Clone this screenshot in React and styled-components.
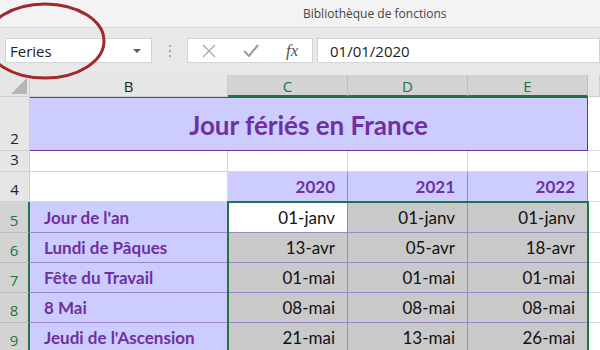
import React from "react";
import styled, { createGlobalStyle } from "styled-components";

const Global = createGlobalStyle`
  html, body {
    margin: 0;
    padding: 0;
    width: 600px;
    height: 350px;
    overflow: hidden;
    background: #ffffff;
  }
`;

const GREEN = "#217346";
const LAVENDER = "#ccccff";
const PURPLE = "#7030a0";
const PURPLE_LINE = "#9a86c8";
const GRAY_CELL = "#c9c9c9";
const GRID = "#dadada";

const Window = styled.div`
  position: relative;
  width: 600px;
  height: 350px;
  overflow: hidden;
  font-family: Lato, "Liberation Sans", sans-serif;
`;

const Ribbon = styled.div`
  height: 27px;
  background: #f3f3f3;
  border-bottom: 1px solid #d6d6d6;
  display: flex;
  align-items: center;
  padding-left: 303px;
  font-family: "Open Sans", "Noto Sans", sans-serif;
  font-size: 12px;
  color: #444;
`;

const FormulaBar = styled.div`
  height: 47px;
  box-sizing: border-box;
  background: #e8e8e8;
  display: flex;
  align-items: flex-start;
  padding: 10px 0 0 5px;
  font-family: "Open Sans", "Noto Sans", sans-serif;
`;

const Box = styled.div`
  height: 25px;
  box-sizing: border-box;
  background: #fff;
  border: 1px solid #d4d4d4;
  display: flex;
  align-items: center;
  width: ${(p) => p.$w || "auto"};
  flex: ${(p) => (p.$grow ? 1 : "none")};
  padding: 0 ${(p) => p.$pad || 0}px;
  font-size: 15px;
  color: #222;
`;

const NameText = styled.span`
  flex: 1;
`;

const Caret = styled.span`
  width: 0;
  height: 0;
  border-left: 4px solid transparent;
  border-right: 4px solid transparent;
  border-top: 4px solid #5a5a5a;
  margin-right: 6px;
`;

const Dots = styled.div`
  width: 35px;
  height: 25px;
  display: flex;
  flex-direction: column;
  align-items: center;
  justify-content: center;
  gap: 3px;
  span {
    width: 2px;
    height: 2px;
    background: #a8a8a8;
  }
`;

const FxBox = styled(Box)`
  justify-content: space-around;
  margin-right: 4px;
`;

const Fx = styled.span`
  font-family: "Liberation Serif", serif;
  font-style: italic;
  font-size: 17px;
  color: #555;
`;

const SheetWrap = styled.div`
  position: relative;
`;

const Sheet = styled.div`
  display: grid;
  grid-template-columns: 30px 198px 120px 120px 120px 12px;
  grid-template-rows: 22px 54px 21px 30px 31px 30px 30px 30px 30px;
`;

const Corner = styled.div`
  background: #e6e6e6;
  border-right: 1px solid #cfcfcf;
  border-bottom: 1px solid #cfcfcf;
  box-sizing: border-box;
  position: relative;
  &::after {
    content: "";
    position: absolute;
    right: 2px;
    bottom: 2px;
    width: 0;
    height: 0;
    border-left: 16px solid transparent;
    border-bottom: 16px solid #b6b6b6;
  }
`;

const ColHead = styled.div`
  box-sizing: border-box;
  background: ${(p) => (p.$sel ? "#d3d3d3" : "#e6e6e6")};
  color: ${(p) => (p.$sel ? GREEN : "#222")};
  border-right: 1px solid ${(p) => (p.$sel ? "#bdbdbd" : "#cfcfcf")};
  border-bottom: ${(p) => (p.$sel ? `2px solid ${GREEN}` : "1px solid #cfcfcf")};
  display: flex;
  align-items: center;
  justify-content: center;
  font-family: "Open Sans", "Noto Sans", sans-serif;
  font-size: 15px;
  padding-top: 1px;
`;

const RowHead = styled.div`
  box-sizing: border-box;
  background: ${(p) => (p.$sel ? "#d3d3d3" : "#e6e6e6")};
  color: ${(p) => (p.$sel ? GREEN : "#222")};
  border-bottom: 1px solid ${(p) => (p.$sel ? "#bdbdbd" : "#d0d0d0")};
  border-right: ${(p) => (p.$sel ? `2px solid ${GREEN}` : "1px solid #cfcfcf")};
  display: flex;
  align-items: flex-end;
  justify-content: center;
  padding-bottom: 2px;
  font-family: "Open Sans", "Noto Sans", sans-serif;
  font-size: 15px;
`;

const Cell = styled.div`
  box-sizing: border-box;
  background: ${(p) => p.$bg || "#fff"};
  border-right: 1px solid ${(p) => p.$line || GRID};
  border-bottom: 1px solid ${(p) => p.$line || GRID};
  display: flex;
  align-items: flex-end;
  justify-content: ${(p) => (p.$right ? "flex-end" : "flex-start")};
  padding: 0 12px 4px 14px;
  font-size: 17px;
  font-weight: ${(p) => (p.$bold ? 700 : 400)};
  color: ${(p) => (p.$bold ? PURPLE : "#111")};
  white-space: nowrap;
`;

const Title = styled.div`
  grid-column: 2 / 6;
  box-sizing: border-box;
  background: ${LAVENDER};
  border: 1px solid ${PURPLE};
  border-left: none;
  display: flex;
  align-items: center;
  justify-content: center;
  padding-top: 2px;
  font-size: 26px;
  font-weight: 700;
  color: ${PURPLE};
`;

/* selection outline over C5:E9 */
const Selection = styled.div`
  position: absolute;
  left: 227px;
  top: 126px;
  width: 362px;
  height: 160px;
  box-sizing: border-box;
  border: 2px solid ${GREEN};
  border-bottom: none;
  pointer-events: none;
`;

const Ellipse = styled.svg`
  position: absolute;
  left: 0;
  top: 0;
  pointer-events: none;
  z-index: 5;
`;

const years = ["2020", "2021", "2022"];
const rows = [
  { n: 5, label: "Jour de l'an", v: ["01-janv", "01-janv", "01-janv"] },
  { n: 6, label: "Lundi de Pâques", v: ["13-avr", "05-avr", "18-avr"] },
  { n: 7, label: "Fête du Travail", v: ["01-mai", "01-mai", "01-mai"] },
  { n: 8, label: "8 Mai", v: ["08-mai", "08-mai", "08-mai"] },
  { n: 9, label: "Jeudi de l'Ascension", v: ["21-mai", "13-mai", "26-mai"] },
];

export default function App() {
  return (
    <Window>
      <Global />
      <Ribbon>Bibliothèque de fonctions</Ribbon>
      <FormulaBar>
        <Box $w="147px" $pad={4}>
          <NameText>Feries</NameText>
          <Caret />
        </Box>
        <Dots>
          <span />
          <span />
          <span />
        </Dots>
        <FxBox $w="126px">
          <svg width="14" height="14" viewBox="0 0 14 14">
            <path d="M1 1L13 13M13 1L1 13" stroke="#a9a9a9" strokeWidth="1.4" fill="none" />
          </svg>
          <svg width="16" height="13" viewBox="0 0 16 13">
            <path d="M1 7L6 12L15 1" stroke="#9a9a9a" strokeWidth="2" fill="none" />
          </svg>
          <Fx>fx</Fx>
        </FxBox>
        <Box $grow $pad={12}>01/01/2020</Box>
      </FormulaBar>
      <SheetWrap>
        <Sheet>
          <Corner />
          <ColHead>B</ColHead>
          <ColHead $sel>C</ColHead>
          <ColHead $sel>D</ColHead>
          <ColHead $sel>E</ColHead>
          <ColHead />

          <RowHead>2</RowHead>
          <Title>Jour fériés en France</Title>
          <Cell />

          <RowHead>3</RowHead>
          <Cell $line="#d8c8ec" />
          <Cell />
          <Cell />
          <Cell />
          <Cell />

          <RowHead>4</RowHead>
          <Cell />
          {years.map((y) => (
            <Cell key={y} $bg={LAVENDER} $line={PURPLE_LINE} $right $bold>
              {y}
            </Cell>
          ))}
          <Cell />

          {rows.map((r) => (
            <React.Fragment key={r.n}>
              <RowHead $sel>{r.n}</RowHead>
              <Cell $bg={LAVENDER} $line={PURPLE_LINE} $bold>
                {r.label}
              </Cell>
              {r.v.map((v, i) => (
                <Cell
                  key={i}
                  $bg={r.n === 5 && i === 0 ? "#fff" : GRAY_CELL}
                  $line={PURPLE_LINE}
                  $right
                >
                  {v}
                </Cell>
              ))}
              <Cell />
            </React.Fragment>
          ))}
        </Sheet>
        <Selection />
      </SheetWrap>
      <Ellipse width="200" height="100" viewBox="0 0 200 100">
        <ellipse cx="45" cy="41" rx="59" ry="37" stroke="#a3282b" strokeWidth="3" fill="none" />
      </Ellipse>
    </Window>
  );
}
